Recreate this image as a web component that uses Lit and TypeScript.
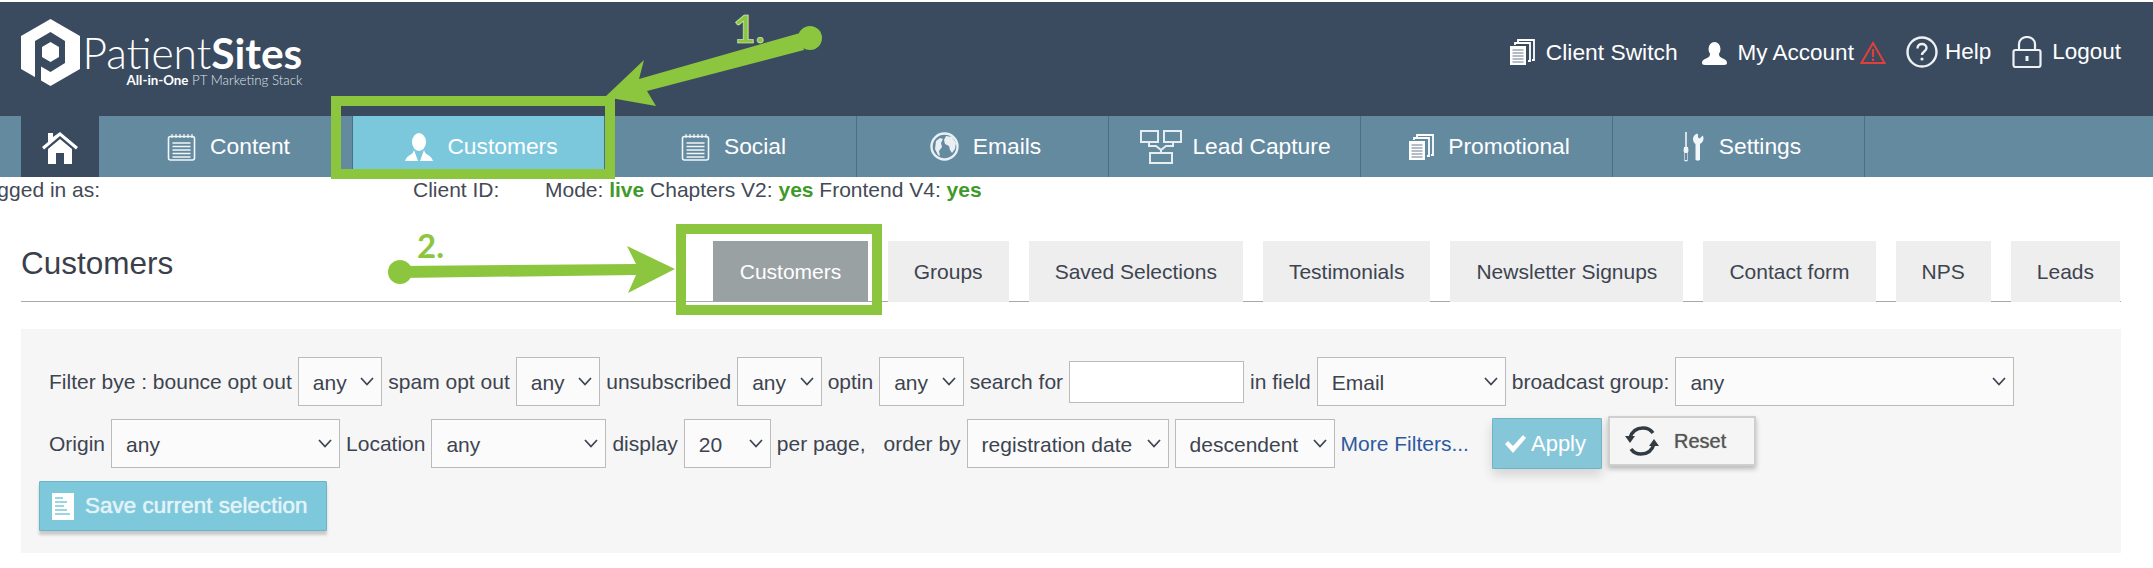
import { LitElement, html, css, svg } from "lit";
import { customElement } from "lit/decorators.js";

const noteIcon = html`<svg class="ic" width="29" height="28" viewBox="0 0 29 28" fill="none" stroke="#f2f6f8" stroke-width="1.6"><rect x="1.5" y="3.5" width="26" height="23.5" rx="2"/><path d="M5 1v4M9 1v4M13 1v4M17 1v4M21 1v4M25 1v4" stroke-width="1.2"/><path d="M5.5 10h18M5.5 13.5h18M5.5 17h18M5.5 20.5h18M5.5 24h18" stroke-width="1.7"/></svg>`;
const personNav = html`<svg class="ic" width="28" height="28" viewBox="0 0 28 28" fill="#fff"><ellipse cx="14" cy="9" rx="7" ry="9"/><path d="M9 17c-1 3-2 4-4 5-2 1-4 3-5 6h13zM19 17c1 3 2 4 4 5 2 1 4 3 5 6H15z"/></svg>`;
const docsIcon = html`<svg class="ic" width="25" height="26" viewBox="0 0 25 26" fill="none"><path d="M8 3V1h16v20h-2" stroke="#fff" stroke-width="1.8"/><path d="M5 6V4h15v18h-2" stroke="#fff" stroke-width="1.8"/><rect x="0" y="7" width="16" height="19" fill="#fff"/><path d="M2.5 11h11M2.5 14h11M2.5 17h11M2.5 20h11M2.5 23h11" stroke="#6b7c8c" stroke-width="1.2"/></svg>`;
const globeIcon = html`<svg class="ic" width="29" height="29" viewBox="0 0 29 29" fill="#e8f0f3"><circle cx="14.5" cy="14.5" r="13" fill="none" stroke="#e8f0f3" stroke-width="2.4"/><path d="M16 4l6 1 4 6-1 6-3 4-2-3-1-4-4-2-1-4zM6 9l4-3 3 1-2 4 1 4-3 4 1 5-2-1-3-6z"/></svg>`;
const netIcon = html`<svg class="ic" width="42" height="34" viewBox="0 0 42 34" fill="none" stroke="#e6eef2" stroke-width="2"><rect x="1" y="1" width="17" height="11"/><rect x="24" y="1" width="17" height="11"/><rect x="10" y="23" width="22" height="10"/><path d="M9 12v4h7l5 4 5-4h7v-4M21 20v3"/></svg>`;
const toolsIcon = html`<svg class="ic" width="23" height="30" viewBox="0 0 23 30" fill="#f2f6f8"><path d="M3.2 0h1.6v15h1.2l.5 4-.9 2v8.200H2.400V21l-.9-2 .5-4h1.200z"/><rect x="3" y="21" width="2" height="7" fill="#648aa0"/><path d="M15 1.500c-2.500 1-4 3-4 5.500s1.200 4 2.500 5v15.500c0 1.500 4.500 1.500 4.500 0V12c1.800-1 3.500-2.800 3.500-5.500 0-1.500-.4-2.300-.8-3l-3 3-1.700-1 .1-2.800z"/></svg>`;
const homeIcon = html`<svg width="36" height="32" viewBox="0 0 36 32" fill="#fff"><path d="M6 1h5v4L18 0l18 15-2 2.500L18 4 2 17.500 0 15l6-5z"/><path d="M18 7l12 10v15h-8V21h-8v11H6V17z"/></svg>`;
const personTop = html`<svg width="25" height="23" viewBox="0 0 25 23" fill="#fff"><ellipse cx="12.500" cy="7" rx="6" ry="7"/><path d="M8 12c0 2-1 3-3 4s-5 2-5 5c0 1 1 2 3 2h19c2 0 3-1 3-2 0-3-3-4-5-5s-3-2-3-4z"/></svg>`;
const alertIcon = html`<svg width="26" height="23" viewBox="0 0 26 23" fill="none" stroke="#e0403c" stroke-width="2"><path d="M13 2 1.500 22h23z"/><path d="M13 8v8M13 17.500v2.500" stroke-width="2.200"/></svg>`;
const helpIcon = html`<svg width="32" height="32" viewBox="0 0 32 32" fill="none" stroke="#eef2f4"><circle cx="16" cy="16" r="14.500" stroke-width="2.400"/><path d="M11.500 12.500c0-3 2-4.500 4.500-4.500s4.500 1.500 4.500 4c0 3.500-4.500 3.500-4.500 7" stroke-width="2.400"/><circle cx="16" cy="23" r="1.600" fill="#eef2f4" stroke="none"/></svg>`;
const lockIcon = html`<svg width="30" height="32" viewBox="0 0 30 32" fill="none" stroke="#eef2f4" stroke-width="2.200"><rect x="1.500" y="14" width="27" height="17" rx="2"/><path d="M7 14V8c0-4 3.500-7 8-7s8 3 8 7v6"/><path d="M15 20v5" stroke-width="3"/></svg>`;
const chevron = html`<svg class="chev" width="14" height="9" viewBox="0 0 14 9" fill="none" stroke="#3f4652" stroke-width="1.800"><path d="M1 1l6 6.500L13 1"/></svg>`;
const checkIcon = html`<svg width="21" height="18" viewBox="0 0 21 18" fill="#fff"><path d="M0 9l3-3 5 5L18 0l3 3L8 18z"/></svg>`;
const resetIcon = html`<svg width="34" height="30" viewBox="0 0 34 30" fill="none" stroke="#333b42" stroke-width="3.400"><path d="M5 12C7 5 12 2 18 2c4 0 8 2 10 5"/><path d="M29 18c-2 7-7 10-13 10-4 0-8-2-10-5"/><path d="M0 10h10l-5 7zM24 20h10l-5-7z" fill="#333b42" stroke="none"/></svg>`;
const saveIcon = html`<svg width="22" height="27" viewBox="0 0 22 27"><rect width="22" height="27" fill="#fff"/><path d="M3 5h8M3 9h12M3 13h9M3 17h12M3 21h15" stroke="#7ec8dc" stroke-width="1.400"/></svg>`;

const logo = html`<svg width="59" height="67" viewBox="0 0 59 67"><path fill="#fff" d="M29.500 0 59 17v33L29.500 67 0 50V17z"/><path fill="#3a4a5f" d="M29.500 13 44 22v22l-14.500 9-9.500-5.500V64l-6-5V22z"/><path fill="#fff" d="M29.500 23 38 28v10l-8.500 5L21 38V28z"/></svg>`;

const arrows = svg`
  <polygon fill="#8cc63f" points="605,97 644,60 639,79 800,33 804,50 647,91 656,106"/>
  <ellipse fill="#8cc63f" cx="810" cy="38" rx="12" ry="12"/>
  <polygon fill="#8cc63f" points="675,269 627,246 636,264 400,266 400,278 636,275 628,293"/>
  <ellipse fill="#8cc63f" cx="400" cy="272" rx="12" ry="12"/>
`;

@customElement("app-root")
export class AppRoot extends LitElement {
  static styles = css`
    :host { display: block; position: relative; width: 2153px; height: 568px; overflow: hidden; background: #fff; font-family: "Liberation Sans", Arial, sans-serif; color: #3d4450; }
    .head { margin-top: 2px; height: 114px; background: #3a4a5f; display: flex; justify-content: space-between; padding: 17px 32px 0 21px; box-sizing: border-box; }
    .brand { display: flex; gap: 2.500px; height: 67px; }
    .wordmark { display: flex; flex-direction: column; color: #fff; font-family: Lato, sans-serif; align-items: flex-end; }
    .wm-top { font-size: 42.500px; font-weight: 300; line-height: 39px; margin-top: 14px; white-space: nowrap; }
    .wm-top b { font-weight: 700; }
    .wm-tag { font-size: 13.300px; line-height: 16px; font-weight: 300; white-space: nowrap; color: #dfe4e9; }
    .wm-tag b { font-weight: 700; color: #fff; }
    .top-links { display: flex; align-items: center; height: 52px; margin-top: 7px; color: #fff; font-size: 22.500px; }
    .tl { display: flex; align-items: center; gap: 11px; white-space: nowrap; }
    .tl.client { font-size: 22.800px; }
    .tl.acc { margin-left: 24px; gap: 11px; padding-top: 2px; }
    .tl.alert { margin-left: 6px; }
    .tl.help { margin-left: 20px; gap: 7px; }
    .tl.logout { margin-left: 21px; gap: 10px; }
    nav { height: 61px; background: #648aa0; display: flex; padding-left: 21px; color: #fff; font-size: 22.800px; }
    .home { width: 78px; background: #3a4a5f; display: flex; align-items: center; justify-content: center; padding-top: 3px; box-sizing: border-box; }
    .item { width: 252px; box-sizing: border-box; border-right: 1px solid #4a6f86; display: flex; align-items: center; justify-content: center; gap: 14px; padding-left: 6px; white-space: nowrap; }
    .item.first { width: 254px; border-right: 1px solid #4a6f86; }
    .item.on { background: #7bc8dd; }
    .item.lead { gap: 10px; padding-left: 2px; }
    .info { height: 25px; font-size: 21px; line-height: 25px; margin-top: 0; white-space: nowrap; display: flex; color: #444a55; }
    .info .who { margin-left: -26px; width: 439px; }
    .info .id { width: 132px; }
    .info b { color: #3f9a2b; }
    .titlebar { margin: 39px 32px 0 21px; height: 60px; display: flex; justify-content: space-between; border-bottom: 1px solid #a8a8a8; }
    h1 { margin: 0; font-weight: 400; font-size: 31.500px; line-height: 44px; color: #3a3f4b; }
    .tabs { display: flex; gap: 20px; height: 61px; margin-right: 1px; }
    .tab { background: #eee; padding: 0 26px; font-size: 21px; line-height: 61px; color: #3d4450; white-space: nowrap; }
    .tab.on { background: #9aa1a3; color: #fff; padding: 0 26.500px; }
    .panel { margin: 27px 32px 0 21px; height: 224px; background: #f6f6f6; padding: 28px 0 0 28px; box-sizing: border-box; font-size: 21px; }
    .row { display: flex; align-items: center; gap: 6px; height: 49px; margin-bottom: 13px; white-space: nowrap; }
    .sel { position: relative; height: 49px; flex: none; }
    select { appearance: none; -webkit-appearance: none; width: 100%; height: 100%; background: #fbfbfb; border: 1px solid #bbb; border-radius: 0; font: 21px "Liberation Sans", Arial, sans-serif; color: #3d4450; padding: 2px 0 0 14px; margin: 0; box-sizing: border-box; outline: none; }
    .chev { position: absolute; right: 8px; top: 20px; pointer-events: none; }
    .w85 { width: 84.500px; }
    .w87 { width: 87px; }
    .w175 { width: 175px; }
    .w188 { width: 189px; }
    .w202 { width: 202px; }
    .w160 { width: 160px; }
    .w229 { width: 229px; }
    .w338 { width: 339px; }
    input { width: 175px; height: 42px; background: #fff; border: 1px solid #bbb; box-sizing: border-box; margin: 0; flex: none; }
    a { color: #2f5a9e; text-decoration: none; }
    .gap-l { margin-left: 12px; }
    button { font-family: "Liberation Sans", Arial, sans-serif; margin: 0; box-sizing: border-box; display: flex; align-items: center; border-radius: 1px; flex: none; }
    .apply { margin-left: 17px; width: 110px; height: 51px; background: #86c6d9; border: 1px solid #6fb3c7; color: #fff; font-size: 22px; gap: 5px; padding: 0 0 0 12px; box-shadow: 0 6px 12px rgba(0,0,0,.14); }
    .reset { width: 148px; height: 50px; background: #f5f5f5; border: 2px solid #cfcfcf; color: #555; font-size: 20px; gap: 15px; padding: 0 0 0 15px; box-shadow: 0 3px 5px rgba(0,0,0,.25); margin-bottom: 5px; margin-left: 0; text-shadow: 0 0 1px #777; }
    .save { margin-left: -10px; width: 288px; height: 50px; background: #7ec8dc; border: 1px solid #6cb4c8; color: #e0f3f8; font-size: 22.500px; gap: 11px; padding: 0 0 0 12px; box-shadow: 0 4px 3px rgba(0,0,0,.18); text-shadow: 0 0 1px #fff; white-space: nowrap; }
    .overlay { position: absolute; left: 0; top: 0; pointer-events: none; }
    .box { position: absolute; border: 10px solid #8cc63f; box-sizing: border-box; pointer-events: none; }
    .b1 { left: 331px; top: 96px; width: 284px; height: 83px; }
    .b2 { left: 676px; top: 224px; width: 206px; height: 91px; }
    .lbl { position: absolute; color: #8cc63f; font-family: Lato, sans-serif; font-weight: 700; line-height: 1; }
    .l1 { left: 733px; top: 9px; font-size: 39px; -webkit-text-stroke: .6px #e8f2d8; }
    .l2 { left: 417px; top: 229px; font-size: 33px; }
  `;

  private sel(cls: string, label: string) {
    return html`<div class="sel ${cls}"><select aria-label=${label}><option>${label}</option></select>${chevron}</div>`;
  }

  render() {
    const navItems = [
      [noteIcon, "Content", "first"], [personNav, "Customers", "on"], [noteIcon, "Social", ""],
      [globeIcon, "Emails", ""], [netIcon, "Lead Capture", "lead"], [docsIcon, "Promotional", ""], [toolsIcon, "Settings", ""],
    ] as const;
    const tabs = ["Groups", "Saved Selections", "Testimonials", "Newsletter Signups", "Contact form", "NPS", "Leads"];
    return html`
      <header class="head">
        <div class="brand">
          ${logo}
          <div class="wordmark">
            <div class="wm-top">Patient<b>Sites</b></div>
            <div class="wm-tag"><b>All-in-One</b> PT Marketing Stack</div>
          </div>
        </div>
        <div class="top-links">
          <span class="tl client">${docsIcon}Client Switch</span>
          <span class="tl acc">${personTop}My Account</span>
          <span class="tl alert">${alertIcon}</span>
          <span class="tl help">${helpIcon}Help</span>
          <span class="tl logout">${lockIcon}Logout</span>
        </div>
      </header>
      <nav>
        <div class="home">${homeIcon}</div>
        ${navItems.map(([ic, t, c]) => html`<div class="item ${c}">${ic}<span>${t}</span></div>`)}
      </nav>
      <div class="info">
        <span class="who">Logged in as:</span>
        <span class="id">Client ID:</span>
        <span>Mode: <b>live</b> Chapters V2: <b>yes</b> Frontend V4: <b>yes</b></span>
      </div>
      <div class="titlebar">
        <h1>Customers</h1>
        <div class="tabs">
          <div class="tab on">Customers</div>
          ${tabs.map((t) => html`<div class="tab">${t}</div>`)}
        </div>
      </div>
      <section class="panel">
        <div class="row">
          <span>Filter bye : bounce opt out</span>${this.sel("w85", "any")}
          <span>spam opt out</span>${this.sel("w85", "any")}
          <span>unsubscribed</span>${this.sel("w85", "any")}
          <span>optin</span>${this.sel("w85", "any")}
          <span>search for</span><input type="text" />
          <span>in field</span>${this.sel("w188", "Email")}
          <span>broadcast group:</span>${this.sel("w338", "any")}
        </div>
        <div class="row">
          <span>Origin</span>${this.sel("w229", "any")}
          <span>Location</span>${this.sel("w175", "any")}
          <span>display</span>${this.sel("w87", "20")}
          <span>per page,</span><span class="gap-l">order by</span>${this.sel("w202", "registration date")}
          ${this.sel("w160", "descendent")}
          <a href="#">More Filters...</a>
          <button class="apply">${checkIcon}Apply</button>
          <button class="reset">${resetIcon}Reset</button>
        </div>
        <button class="save">${saveIcon}Save current selection</button>
      </section>
      <div class="box b1"></div>
      <div class="box b2"></div>
      <svg class="overlay" width="2153" height="568" viewBox="0 0 2153 568">${arrows}</svg>
      <div class="lbl l1">1.</div>
      <div class="lbl l2">2.</div>
    `;
  }
}
